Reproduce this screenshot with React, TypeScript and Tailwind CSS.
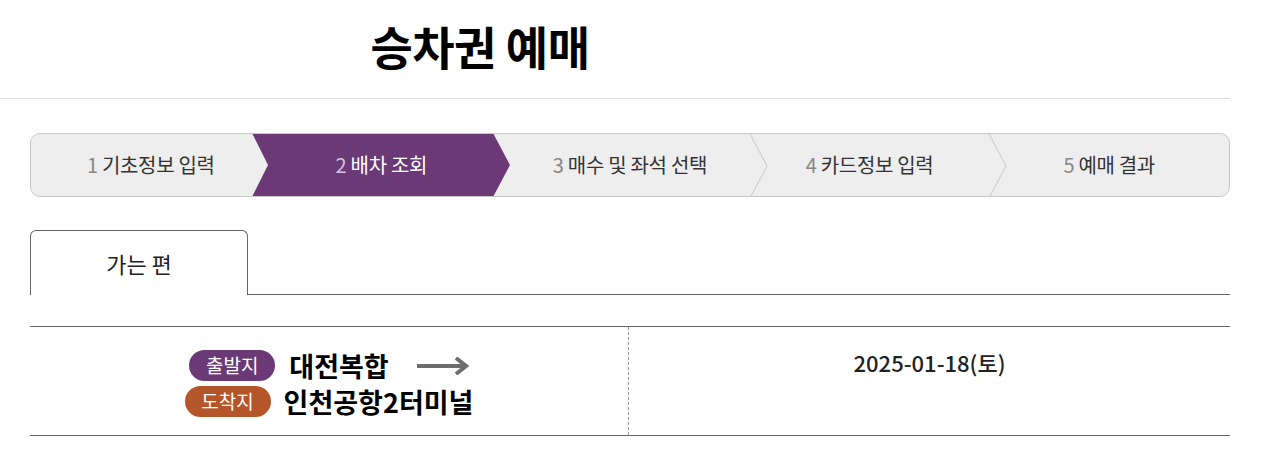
import React from 'react';

const steps = [
  { no: 1, label: '기초정보 입력' },
  { no: 2, label: '배차 조회' },
  { no: 3, label: '매수 및 좌석 선택' },
  { no: 4, label: '카드정보 입력' },
  { no: 5, label: '예매 결과' },
];

const ACTIVE = 2;

const Chevron: React.FC = () => (
  <svg width="20" height="64" viewBox="0 0 20 64" className="absolute -right-[19px] top-0 z-10">
    <polyline points="1,0 18,32 1,64" fill="none" stroke="#c8c8c8" strokeWidth="1" />
  </svg>
);

const StepBar: React.FC = () => (
  <div className="relative flex h-[64px] w-[1200px] overflow-hidden rounded-[10px] border border-[#c8c8c8] bg-[#eeeeee]">
    {steps.map((s) => {
      const active = s.no === ACTIVE;
      return (
        <div key={s.no} className="relative flex h-full w-[240px] items-center justify-center">
          {active && (
            <svg
              width="258"
              height="64"
              viewBox="0 0 258 64"
              className="absolute -left-[19px] -top-px z-10"
            >
              <polygon points="0,0 241,0 258,32 241,64 0,64 16,32" fill="#6b3a76" />
            </svg>
          )}
          {!active && s.no !== ACTIVE - 1 && s.no < 5 && <Chevron />}
          <span
            className={`relative z-20 text-[20px] tracking-[-0.3px] ${active ? 'pr-[18px] text-white' : 'text-[#333]'}`}
          >
            <span className={active ? 'text-[#d9c3e0]' : 'text-[#888]'}>{s.no}</span> {s.label}
          </span>
        </div>
      );
    })}
  </div>
);

const Arrow: React.FC = () => (
  <svg width="52" height="18" viewBox="0 0 52 18" className="ml-[28px]">
    <line x1="0" y1="9" x2="48" y2="9" stroke="#6e6e6e" strokeWidth="4" />
    <polyline points="39,1 49,9 39,17" fill="none" stroke="#6e6e6e" strokeWidth="4" />
  </svg>
);

export default function App() {
  return (
    <div
      className="min-h-[453px] bg-white text-[#111]"
      style={{ fontFamily: '"Noto Sans CJK KR", "Noto Sans", sans-serif' }}
    >
      <div className="w-[1230px] border-b border-[#dddddd]">
        <h1 className="w-[960px] pt-[12px] pb-[20px] text-center text-[46px] font-bold leading-[66px] tracking-[-0.5px] text-black">
          승차권 예매
        </h1>
      </div>

      <div className="ml-[30px] w-[1200px]">
        <div className="mt-[34px]">
          <StepBar />
        </div>

        <div className="mt-[33px] flex items-end">
          <div className="flex h-[65px] w-[218px] items-center justify-center rounded-t-[6px] border border-b-0 border-[#666] bg-white text-[22px] text-[#222]">
            가는 편
          </div>
          <div className="flex-1 border-b border-[#666]" />
        </div>

        <div className="mt-[31px] flex border-y border-[#666]">
          <div className="flex w-[599px] flex-col items-center gap-[5px] border-r border-dashed border-[#999] pt-[23px] pb-[18px]">
            <div className="flex items-center">
              <span className="flex h-[31px] w-[86px] items-center justify-center rounded-full bg-[#6b3a76] text-[19px] text-white">
                출발지
              </span>
              <span className="ml-[14px] text-[27px] font-bold leading-[31px] text-black">대전복합</span>
              <Arrow />
            </div>
            <div className="flex items-center">
              <span className="flex h-[31px] w-[86px] items-center justify-center rounded-full bg-[#b5562a] text-[19px] text-white">
                도착지
              </span>
              <span className="ml-[13px] text-[27px] font-bold leading-[31px] text-black">인천공항2터미널</span>
            </div>
          </div>
          <div className="flex flex-1 justify-center pt-[19px]">
            <span className="text-[22px] font-medium text-[#222]">2025-01-18(토)</span>
          </div>
        </div>
      </div>
    </div>
  );
}
